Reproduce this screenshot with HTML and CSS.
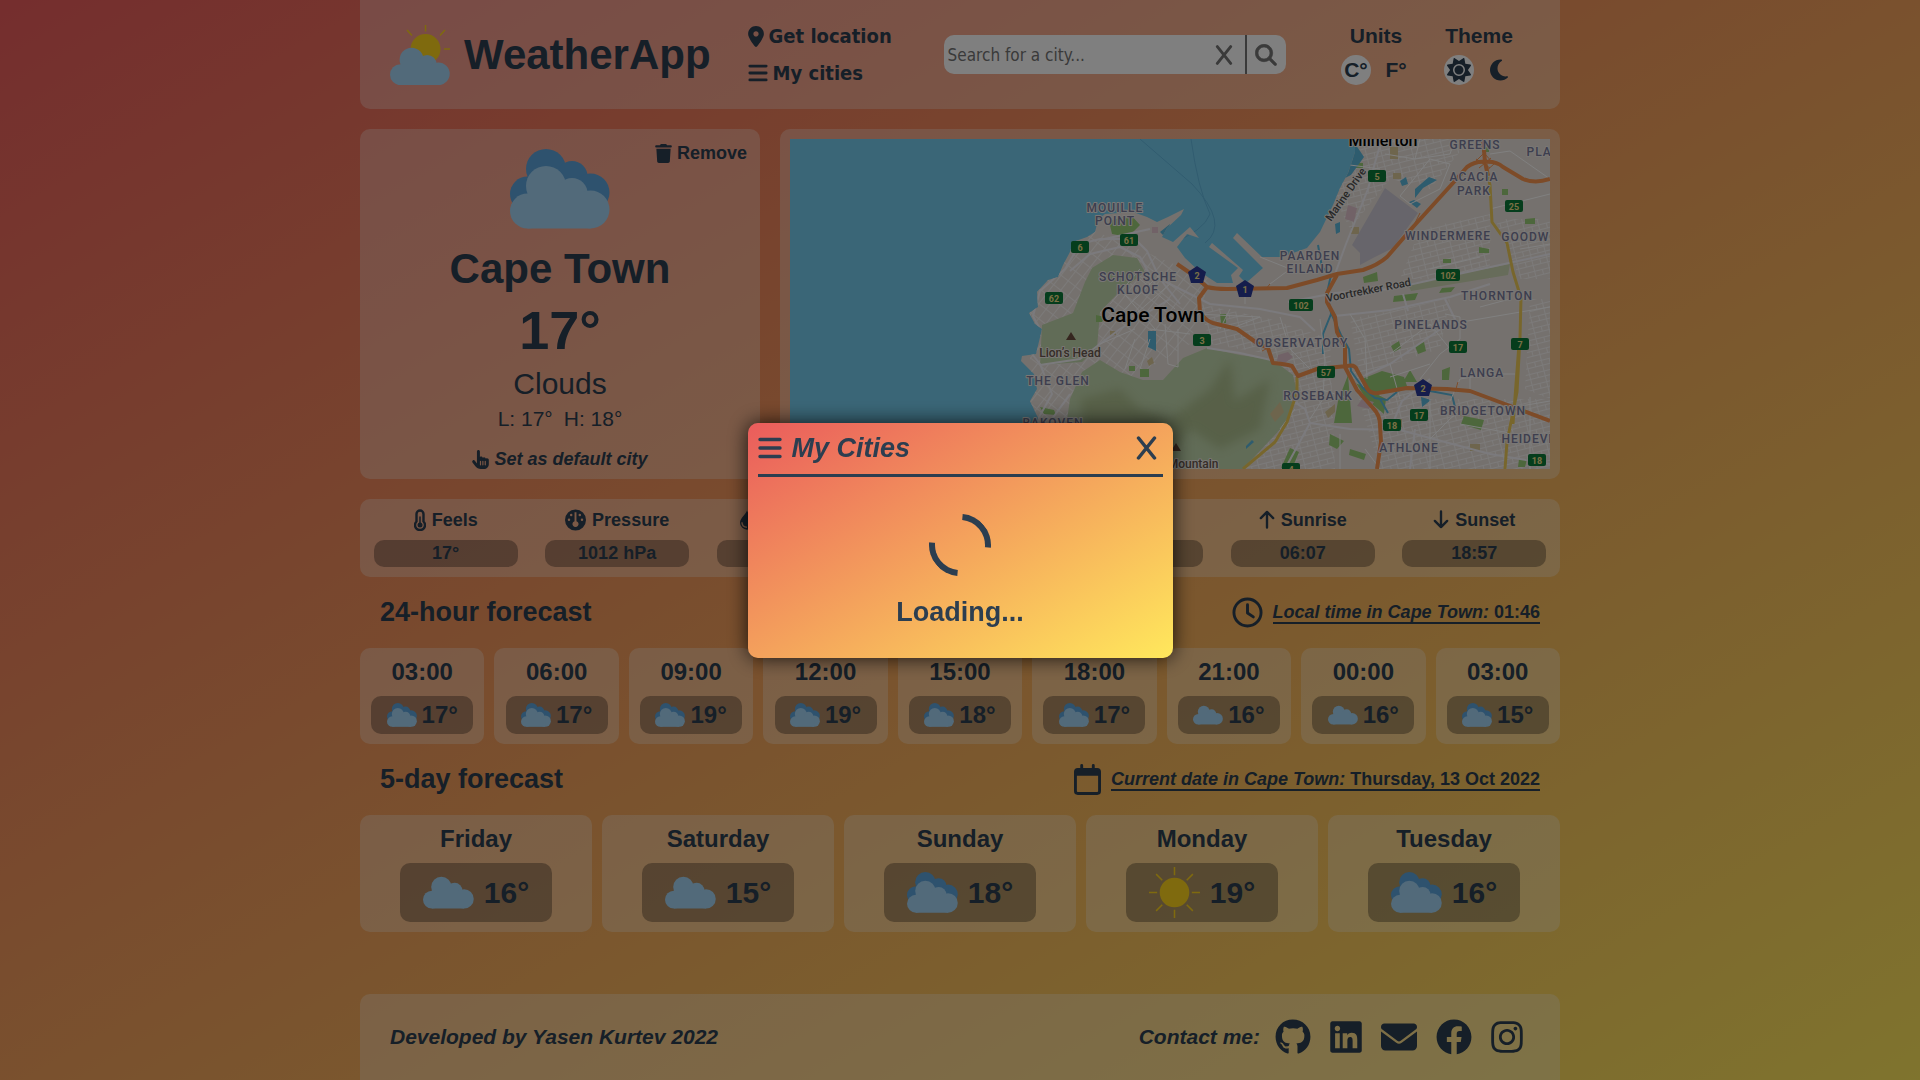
FILE: index.html
```html
<!DOCTYPE html>
<html lang="en">
<head>
<meta charset="utf-8">
<meta name="viewport" content="width=device-width, initial-scale=1">
<title>WeatherApp</title>
<link rel="stylesheet" href="styles.css">
</head>
<body>
<svg class="sprite" aria-hidden="true">
  <defs>
    <g id="cloud-shape"><circle cx="17.500" cy="62" r="17.500"/><circle cx="36" cy="37" r="20"/><circle cx="62" cy="44.500" r="15.500"/><circle cx="80.500" cy="60.500" r="19"/><path d="M17.500 45h63v34.500h-63z"/></g>
    <symbol id="i-clouds" viewBox="0 0 100 100"><use href="#cloud-shape" class="cloud-back" y="-7"/><use href="#cloud-shape" class="cloud-front" y="10"/></symbol>
    <symbol id="i-cloud" viewBox="0 0 100 100"><use href="#cloud-shape" class="cloud-front" y="2"/></symbol>
    <symbol id="i-sunny" viewBox="0 0 50 50"><circle class="sun" cx="25" cy="25" r="14.500"/><path class="rays" d="M25 0v8M25 42v8M0 25h8M42 25h8M7 7l6 6M37 37l6 6M43 7l-6 6M7 43l6-6"/></symbol>
    <symbol id="i-logo" viewBox="0 0 60 60"><circle class="sun" cx="35.500" cy="24" r="15"/><path class="rays" d="M35.500 0v6.500M17 5l5 5.500M55 5l-5 5.500M54 24h6"/><use href="#cloud-shape" class="cloud-front" transform="translate(0 12.500) scale(.6)"/></symbol>
    <symbol id="i-pin" viewBox="0 0 384 512"><path d="M215.700 499.200C267 435 384 279.400 384 192C384 86 298 0 192 0S0 86 0 192c0 87.400 117 243 168.300 307.200c12.300 15.300 35.100 15.300 47.400 0zM192 256c-35.300 0-64-28.700-64-64s28.700-64 64-64s64 28.700 64 64s-28.700 64-64 64z"/></symbol>
    <symbol id="i-bars" viewBox="0 0 24 22"><path class="line" stroke-width="3.400" d="M2 2.500h20M2 11h20M2 19.500h20"/></symbol>
    <symbol id="i-x" viewBox="0 0 20 24"><path class="line" stroke-width="3.500" d="M2 2l16 20M18 2L2 22"/></symbol>
    <symbol id="i-search" viewBox="-8 -8 528 528"><path stroke="currentColor" stroke-width="16" d="M416 208c0 45.900-14.900 88.300-40 122.700L502.600 457.400c12.500 12.500 12.500 32.800 0 45.300s-32.800 12.500-45.300 0L330.700 376c-34.400 25.200-76.800 40-122.700 40C93.100 416 0 322.900 0 208S93.100 0 208 0S416 93.100 416 208zM208 352a144 144 0 1 0 0-288 144 144 0 1 0 0 288z"/></symbol>
    <symbol id="i-sun" viewBox="0 0 512 512"><path d="M361.500 1.200c5 2.100 8.600 6.600 9.600 11.900L391 121l107.900 19.800c5.300 1 9.800 4.600 11.900 9.600s1.500 10.700-1.600 15.200L446.900 256l62.300 90.300c3.100 4.500 3.700 10.200 1.600 15.200s-6.600 8.600-11.900 9.600L391 391 371.100 498.900c-1 5.300-4.600 9.800-9.600 11.900s-10.700 1.500-15.200-1.600L256 446.900l-90.300 62.300c-4.500 3.100-10.200 3.700-15.200 1.600s-8.600-6.600-9.600-11.900L121 391 13.100 371.100c-5.300-1-9.800-4.600-11.900-9.600s-1.500-10.700 1.600-15.200L65.100 256 2.800 165.700c-3.100-4.500-3.700-10.200-1.600-15.200s6.600-8.600 11.900-9.600L121 121 140.900 13.100c1-5.300 4.600-9.800 9.600-11.900s10.700-1.500 15.200 1.600L256 65.100 346.300 2.800c4.500-3.100 10.200-3.700 15.200-1.600zM160 256a96 96 0 1 1 192 0 96 96 0 1 1-192 0zm224 0a128 128 0 1 0-256 0 128 128 0 1 0 256 0z"/></symbol>
    <symbol id="i-moon" viewBox="0 0 384 512"><path d="M223.500 32C100 32 0 132.300 0 256S100 480 223.500 480c60.600 0 115.500-24.200 155.800-63.400c5-4.900 6.300-12.500 3.100-18.700s-10.100-9.700-17-8.500c-9.800 1.700-19.800 2.600-30.100 2.600c-96.900 0-175.500-78.800-175.500-176c0-65.800 36-123.100 89.300-153.300c6.100-3.500 9.200-10.500 7.700-17.300s-7.300-11.900-14.300-12.500c-6.300-.5-12.600-.8-19-.8z"/></symbol>
    <symbol id="i-trash" viewBox="0 0 448 512"><path d="M135.200 17.700L128 32H32C14.300 32 0 46.300 0 64S14.300 96 32 96H416c17.700 0 32-14.300 32-32s-14.300-32-32-32H320l-7.200-14.300C307.400 6.800 296.300 0 284.200 0H163.800c-12.100 0-23.200 6.800-28.600 17.700zM416 128H32L53.200 467c1.600 25.300 22.600 45 47.900 45H346.900c25.300 0 46.300-19.700 47.900-45L416 128z"/></symbol>
    <symbol id="i-hand" viewBox="0 0 448 512"><path d="M128 40c0-22.100 17.900-40 40-40s40 17.900 40 40V188.200c8.500-7.600 19.700-12.200 32-12.200c20.600 0 38.200 13 45 31.200c8.800-9.300 21.200-15.200 35-15.200c25.300 0 46 19.500 47.900 44.300c8.500-7.700 19.800-12.300 32.100-12.300c26.500 0 48 21.500 48 48v112c0 70.700-57.300 128-128 128H234.700c-60 0-118-30-154.700-80L8 336c-13.300-17.700-9.700-42.700 8-56s42.700-9.700 56 8l56 74.700V40zM240 304c0-8.800-7.200-16-16-16s-16 7.200-16 16v96c0 8.800 7.200 16 16 16s16-7.200 16-16V304zm48-16c-8.800 0-16 7.200-16 16v96c0 8.800 7.200 16 16 16s16-7.200 16-16V304c0-8.800-7.200-16-16-16zm80 16c0-8.800-7.200-16-16-16s-16 7.200-16 16v96c0 8.800 7.200 16 16 16s16-7.200 16-16V304z"/></symbol>
    <symbol id="i-thermo" viewBox="0 0 12 22"><path class="line" stroke-width="2.400" d="M2.500 5a3.500 3.500 0 0 1 7 0v7.500a5 5 0 1 1-7 0z"/><path class="line" stroke-width="1.500" d="M6 8v7"/><circle cx="6" cy="16" r="2.500"/></symbol>
    <symbol id="i-gauge" viewBox="0 0 22 22"><path fill-rule="evenodd" d="M11 0a11 11 0 1 0 0 22a11 11 0 0 0 0-22zM10 3h2v9.200a3.200 3.200 0 1 1-2 0zM6.500 4.500a1.300 1.300 0 1 1 0 2.600a1.300 1.300 0 0 1 0-2.600zM15.500 4.500a1.300 1.300 0 1 1 0 2.600a1.300 1.300 0 0 1 0-2.600zM4.200 9.500a1.300 1.300 0 1 1 0 2.600a1.300 1.300 0 0 1 0-2.600zM17.800 9.500a1.300 1.300 0 1 1 0 2.600a1.300 1.300 0 0 1 0-2.600z"/></symbol>
    <symbol id="i-drop" viewBox="0 0 16 22"><path fill-rule="evenodd" d="M8 0C7 4 0 9 0 14a8 8 0 0 0 16 0C16 9 9 4 8 0zM3 13.500c0 3 2 5 5 5v1.500c-4 0-6.500-2.500-6.500-6.500z"/></symbol>
    <symbol id="i-up" viewBox="0 0 16 20"><path class="line" stroke-width="2.500" d="M8 18.500V2M1.500 8.500L8 2l6.500 6.500"/></symbol>
    <symbol id="i-down" viewBox="0 0 16 20"><path class="line" stroke-width="2.500" d="M8 1.500V18M1.500 11.500L8 18l6.500-6.500"/></symbol>
    <symbol id="i-clock" viewBox="0 0 32 32"><circle class="line" stroke-width="3" cx="16" cy="16" r="14"/><path class="line" stroke-width="3" d="M16 8v8.500l6 4"/></symbol>
    <symbol id="i-calendar" viewBox="0 0 28 32"><path fill-rule="evenodd" d="M6.500 1.500a1.500 1.500 0 0 1 3 0V4h9V1.500a1.500 1.500 0 0 1 3 0V4H24a4 4 0 0 1 4 4v20a4 4 0 0 1-4 4H4a4 4 0 0 1-4-4V8a4 4 0 0 1 4-4h2.500zM3 12v16a1 1 0 0 0 1 1h20a1 1 0 0 0 1-1V12z"/></symbol>
    <symbol id="i-github" viewBox="0 0 496 512"><path d="M165.900 397.400c0 2-2.300 3.600-5.200 3.600-3.300.3-5.600-1.300-5.600-3.600 0-2 2.300-3.600 5.200-3.600 3-.3 5.600 1.300 5.600 3.600zm-31.100-4.500c-.7 2 1.300 4.300 4.300 4.900 2.600 1 5.600 0 6.200-2s-1.300-4.300-4.300-5.200c-2.600-.7-5.500.3-6.200 2.300zM244.800 8C106.100 8 0 113.300 0 252c0 110.900 69.800 205.800 169.500 239.200 12.800 2.300 17.300-5.600 17.300-12.100 0-6.200-.3-40.400-.3-61.400 0 0-70 15-84.700-29.800 0 0-11.400-29.100-27.800-36.600 0 0-22.900-15.700 1.600-15.400 0 0 24.900 2 38.600 25.800 21.900 38.600 58.600 27.500 72.900 20.900 2.300-16 8.800-27.100 16-33.700-55.900-6.200-112.300-14.300-112.300-110.500 0-27.500 7.600-41.300 23.600-58.900-2.600-6.500-11.100-33.300 3-67.900 20.900-6.500 69 27 69 27 20-5.600 41.500-8.500 62.800-8.500s42.800 2.900 62.800 8.500c0 0 48.100-33.600 69-27 14.100 34.700 5.600 61.400 3 67.900 16 17.700 25.800 31.500 25.800 58.900 0 96.500-58.900 104.200-114.800 110.500 9.200 7.900 17 22.900 17 46.400 0 33.700-.3 75.400-.3 83.600 0 6.500 4.600 14.400 17.300 12.100C428.200 457.800 496 362.900 496 252 496 113.300 383.500 8 244.800 8z"/></symbol>
    <symbol id="i-linkedin" viewBox="0 0 448 512"><path d="M416 32H31.900C14.300 32 0 46.500 0 64.300v383.400C0 465.500 14.300 480 31.900 480H416c17.600 0 32-14.500 32-32.300V64.300c0-17.800-14.400-32.300-32-32.300zM135.400 416H69V202.200h66.500V416zm-33.200-243c-21.300 0-38.500-17.300-38.500-38.500S80.900 96 102.200 96c21.200 0 38.500 17.300 38.500 38.500 0 21.300-17.200 38.500-38.500 38.500zm282.100 243h-66.400V312c0-24.800-.5-56.700-34.500-56.700-34.600 0-39.900 27-39.900 54.900V416h-66.400V202.200h63.700v29.200h.9c8.900-16.800 30.600-34.500 62.900-34.500 67.200 0 79.700 44.300 79.700 101.900V416z"/></symbol>
    <symbol id="i-mail" viewBox="0 0 512 512"><path d="M48 64C21.500 64 0 85.500 0 112c0 15.100 7.100 29.300 19.200 38.400L236.800 313.600c11.400 8.500 27 8.500 38.400 0L492.800 150.400c12.100-9.100 19.200-23.300 19.200-38.400c0-26.500-21.500-48-48-48H48zM0 176V384c0 35.300 28.700 64 64 64H448c35.300 0 64-28.700 64-64V176L294.400 339.200c-22.800 17.100-54 17.100-76.800 0L0 176z"/></symbol>
    <symbol id="i-facebook" viewBox="0 0 512 512"><path d="M504 256C504 119 393 8 256 8S8 119 8 256c0 123.780 90.690 226.380 209.250 245V327.690h-63V256h63v-54.640c0-62.150 37-96.480 93.670-96.480 27.140 0 55.520 4.840 55.520 4.840v61h-31.280c-30.800 0-40.410 19.120-40.410 38.730V256h68.780l-11 71.690h-57.780V501C413.310 482.380 504 379.780 504 256z"/></symbol>
    <symbol id="i-instagram" viewBox="0 0 448 512"><path d="M224.100 141c-63.600 0-114.900 51.300-114.900 114.900s51.300 114.900 114.900 114.900S339 319.500 339 255.900 287.700 141 224.100 141zm0 189.600c-41.100 0-74.700-33.500-74.700-74.700s33.500-74.700 74.700-74.700 74.700 33.500 74.700 74.700-33.600 74.700-74.700 74.700zm146.400-194.300c0 14.900-12 26.800-26.800 26.800-14.900 0-26.800-12-26.800-26.800s12-26.800 26.800-26.800 26.800 12 26.800 26.800zm76.100 27.200c-1.700-35.900-9.900-67.700-36.200-93.900-26.200-26.200-58-34.400-93.900-36.200-37-2.100-147.900-2.100-184.900 0-35.800 1.700-67.600 9.900-93.900 36.100s-34.400 58-36.200 93.900c-2.100 37-2.100 147.900 0 184.900 1.700 35.900 9.900 67.700 36.200 93.900s58 34.400 93.900 36.200c37 2.100 147.900 2.100 184.900 0 35.900-1.700 67.700-9.900 93.900-36.200 26.200-26.200 34.400-58 36.200-93.900 2.100-37 2.100-147.800 0-184.800zM398.800 388c-7.800 19.600-22.900 34.700-42.600 42.600-29.500 11.700-99.500 9-132.100 9s-102.700 2.600-132.100-9c-19.600-7.800-34.700-22.900-42.600-42.600-11.700-29.500-9-99.500-9-132.100s-2.600-102.700 9-132.100c7.800-19.600 22.900-34.700 42.600-42.600 29.500-11.700 99.500-9 132.100-9s102.700-2.600 132.100 9c19.600 7.800 34.700 22.900 42.600 42.600 11.700 29.500 9 99.500 9 132.100s2.700 102.700-9 132.100z"/></symbol>
  </defs>
</svg>

<div class="app">
  <header class="header card">
    <div class="brand">
      <svg class="brand-logo" aria-hidden="true"><use href="#i-logo"/></svg>
      <h1 class="brand-name">WeatherApp</h1>
    </div>
    <nav class="nav">
      <button class="nav-item" type="button"><svg class="icon-pin" aria-hidden="true"><use href="#i-pin"/></svg>Get location</button>
      <button class="nav-item" type="button"><svg class="icon-bars" aria-hidden="true"><use href="#i-bars"/></svg>My cities</button>
    </nav>
    <form class="search">
      <input class="search-input" type="text" aria-label="Search for a city" placeholder="Search for a city...">
      <button class="search-clear" type="button" aria-label="Clear"><svg class="icon-clear" aria-hidden="true"><use href="#i-x"/></svg></button>
      <button class="search-go" type="button" aria-label="Search"><svg class="icon-search" aria-hidden="true"><use href="#i-search"/></svg></button>
    </form>
    <div class="settings">
      <div class="setting">
        <span>Units</span>
        <div class="options">
          <button class="option active" type="button">C°</button>
          <button class="option" type="button">F°</button>
        </div>
      </div>
      <div class="setting">
        <span>Theme</span>
        <div class="options">
          <button class="option active" type="button" aria-label="Light"><svg class="icon-theme" aria-hidden="true"><use href="#i-sun"/></svg></button>
          <button class="option" type="button" aria-label="Dark"><svg class="icon-theme" aria-hidden="true"><use href="#i-moon"/></svg></button>
        </div>
      </div>
    </div>
  </header>

  <main>
    <div class="overview">
      <section class="city card">
        <button class="remove" type="button"><svg class="icon-small" aria-hidden="true"><use href="#i-trash"/></svg>Remove</button>
        <svg class="city-icon" aria-hidden="true"><use href="#i-clouds"/></svg>
        <h2 class="city-name">Cape Town</h2>
        <div class="city-temp">17°</div>
        <div class="city-state">Clouds</div>
        <div class="city-range"><span>L: 17°</span><span>H: 18°</span></div>
        <button class="default-city" type="button"><svg class="icon-small" aria-hidden="true"><use href="#i-hand"/></svg>Set as default city</button>
      </section>
      <section class="map-card card">
        <svg class="map" viewBox="0 0 760 330" preserveAspectRatio="xMidYMid slice" role="img" aria-label="Map of Cape Town">
          <defs>
            <pattern id="streets" width="15" height="11" patternUnits="userSpaceOnUse" patternTransform="rotate(-14)"><path class="street" d="M0 .500h15M.500 0v11M8.500 0v5.500M0 5.500h15"/></pattern>
            <pattern id="streets-2" width="9" height="12" patternUnits="userSpaceOnUse" patternTransform="rotate(38)"><path class="street" d="M0 .500h9M.500 0v12"/></pattern>
            <filter id="soft"><feGaussianBlur stdDeviation="5"/></filter>
            <clipPath id="land-clip"><path id="land-shape" d="M246 330L248 279L240 262L247 250L244 235L231 222L232 217L246 215L252 190L245 185L239 174L248 168L247 153L258 141L268 138L273 126L280 113L283 103L297 98L305 93L308 81L315 75L343 73L357 78L367 83L378 78L394 70L391 76L377 89L372 98L383 103L400 88L409 99L397 95L387 108L395 119L410 133L427 144L443 144L441 136L448 129L419 108L422 104L437 117L453 131L449 137L456 144L473 129L443 99L447 94L472 118L492 118L517 109L530 93L543 66L550 49L558 34L565 13L565 0H760V330Z"/></clipPath>
            <clipPath id="hill-clip"><path id="hill-shape" d="M292 233L310 221L330 233L353 241L373 241L393 219L417 209L450 216L483 221L503 236L507 253L497 283L453 330H270L280 260Z"/></clipPath>
          </defs>
          <rect class="water" width="760" height="330"/>
          <path class="ferry" d="M350 0L402 45Q440 85 415 104M401 0Q408 50 420 75Q414 92 380 105"/>
          <use href="#land-shape" class="land"/>
          <g clip-path="url(#land-clip)">
            <path fill="url(#streets-2)" d="M240 330V100L300 90L420 140L400 205L340 240L290 230L285 330Z"/>
            <path fill="url(#streets)" d="M410 165L480 180L540 200L545 330H450L505 250L480 215L420 205ZM560 230L640 260H760V330H590ZM565 0H680L640 50L600 40L560 90L545 60ZM630 90L700 75V140L610 140ZM705 80H760V140L730 140ZM740 160H760V260L735 250ZM560 180L660 160L650 210L570 235Z"/>
            <path class="green" d="M252 186L283 174L295 143L302 129L323 116L347 119L355 133L330 152L310 173L307 209L292 223L250 226Z"/>
            <use href="#hill-shape" class="green"/>
            <g clip-path="url(#hill-clip)"><path class="shade" d="M290 260L330 250L350 270L380 280L420 250L440 220L445 262L480 240L470 290L430 310L400 290L370 330H300Z" filter="url(#soft)"/></g>
            <path class="park" d="M319 82l22-6l9 10l-12 12l-16-3zM572 240l20-8l22 6l4 12l-28 3l-14 2zM548 262l10-26l4 48h-18zM566 244l30 16l-2 15l-18-15zM573 138l14-5l1 9l-14 2zM604 157l24-3l-3 7l-22 2zM652 149l13-1l-4 5l-12 1zM674 277l20 4l-3 10l-20-6zM625 207l9-4l2 9l-8 3zM613 243l7-12l7 12zM577 116l4-13l7 3l-4 12zM652 231l8-3l-1 13h-7zM601 207l8-5l2 7l-7 4zM306 176l9 2l-3 5h-6zM350 230h9v8h-9zM339 227h6v5h-6zM430 175h6v9h-5zM500 309l9 4l-5 12l-13 4zM540 295l14 7l-7 8l-8-4zM560 310l16 5l-2 6l-15-5zM735 80l10-1v6h-10zM689 108l10 2v4h-10zM653 120h8v4h-8zM565 24h8v5h-8zM712 50h6v6h-6zM692 8h7v5h-7zM729 320h8l-2 8h-7zM250 268l14 3l2 5l-12-1z"/>
            <path class="light-green" d="M618 145L720 125L718 136L621 152Z"/>
            <path class="sand" d="M600 8h8v12h-8zM647 137h7v4h-7zM600 280h12v8h-12zM535 273l10-8v8l-7 6zM480 275l10-12l4 10l-9 10zM320 192h6v4h-6zM357 222l5-4l2 6l-5 3zM680 305h10v7h-10zM668 270l8 3l-2 5l-8-3zM561 88h8v7h-8zM603 34h8v6h-8z"/>
            <path class="airfield" d="M595 49L628 74L603 109L583 119L570 126V114L562 106Z"/>
            <path class="pink" d="M558 66l9 3l-3 14l-9-3zM488 216l10-3l5 5l-8 6l-8-2zM572 260l12 3l-5 7l-12-3zM362 88h6v6h-6z"/>
            <path class="river" d="M566 6l8 12l-13 18l-6 3l7-24zM610 42l6-4l2 7l-6 2zM625 50l14-12l8 3l-14 8l-8 10zM619 63l5-2l7 4l-4 4zM552 57l5-4l-2 11l-3 2zM545 85l5-2v10l-4 2zM358 192h8v20l-8-4zM370 93l10-8l-4 14zM631 258l10 3l-9 7zM456 307l6-6l2 2l-8 7z"/>
            <path class="stream" d="M528 106l4 22l9 8l-4 18l4 20l10 22l8 14l2 22l12 17l12 10l12 2l15-12M541 175l-8 20v20M590 260l8 14M640 252l22 4l3 12"/>
            <path class="road wide" d="M592 0L586 20L578 50L556 105L545 135M248 280L262 255L250 225L242 215L250 190L243 177L250 152L275 130L290 105L310 100L345 100L357 112L370 140L390 165M280 132L300 115L330 108L350 118L365 145M310 101L360 90M250 226L290 220L330 190L380 160M370 140L420 165L470 170L510 178L525 192M545 177L600 171L660 158L700 145M498 163L545 154L600 150L760 115M417 209L450 214L485 222M500 260L515 270L520 284L560 290L610 291L700 315L760 325M600 291L612 262L640 240M520 284L495 330M620 330L625 290M280 255L262 280M575 236L600 225L665 180L655 160M613 155L618 172"/>
            <path class="road" d="M595 15L625 20L660 15L665 0M560 26L590 30M610 57L640 20L660 25L650 50L620 65ZM625 20L630 0M700 15L720 12L760 40M700 70L760 55M640 130L690 118M730 110L760 105M660 185L760 168M690 168L720 160M600 215L640 185L660 210M560 175L575 200L577 240M470 118L500 130L480 145M405 175L470 178L440 190M440 170L430 190M490 178L500 210L520 230M455 153V165M530 180L535 220L533 260L520 280M505 270L490 290M320 165L350 130M330 175L370 135M340 180L380 145M330 150L365 190M350 140L385 170M360 200L350 230M375 185L378 225L388 228V190M360 190L400 195M345 200L335 230M310 205L345 190M640 260V330M660 262L670 240L700 235L725 235M680 230V252M670 285L725 295M740 258V330M725 268L760 262M550 295V330M575 310L590 330M640 300L660 280L672 270M610 260L600 225M530 250L560 260M655 175L670 178V200L650 215L630 240M600 238L640 225"/>
            <path class="road yellow" d="M698 38L700 46L702 83L717 104L723 133L731 159L730 199L727 253L717 303L715 330M507 238V253L497 283L485 303L453 330M729 205L723 285"/>
            <path class="road motorway" d="M387 125L403 136L417 148Q425 150 437 150L497 149L527 141L547 135L573 131Q588 126 597 118L623 88L663 44L677 28Q686 22 695 23Q706 22 713 28L733 40Q745 45 760 40M417 148L409 159L410 173Q416 182 423 184L447 190L467 204L478 209L483 224Q495 225 502 227L508 237L527 230L557 227Q565 225 567 231L577 249Q580 255 588 254L617 249L657 250L680 252L723 268L760 282M547 136L537 154V163L545 178L547 193L555 208V228L567 251L583 269Q590 276 590 286L591 303L587 330M693 0L695 23L698 37"/>
            <path class="ramp" d="M686 20L700 29M689 29L701 19M685 23L694 14L704 25L695 33M625 84L630 74M475 151L480 145M665 253L668 243M478 209L472 212"/>
          </g>
          <g class="peak"><path d="M276 201l5-8l5 8zM381 312l5-8l5 8z"/></g>
          <g class="map-label">
            <text x="325" y="73">MOUILLE</text><text x="325" y="86">POINT</text>
            <text x="348" y="142">SCHOTSCHE</text><text x="348" y="155">KLOOF</text>
            <text x="268" y="246">THE GLEN</text><text x="263" y="288">BAKOVEN</text>
            <text x="520" y="121">PAARDEN</text><text x="520" y="134">EILAND</text>
            <text x="685" y="10">GREENS</text><text x="761" y="17">PLATTE</text>
            <text x="684" y="42">ACACIA</text><text x="684" y="56">PARK</text>
            <text x="658" y="101">WINDERMERE</text><text x="749" y="102">GOODWOOD</text>
            <text x="707" y="161">THORNTON</text><text x="641" y="190">PINELANDS</text>
            <text x="512" y="208">OBSERVATORY</text><text x="692" y="238">LANGA</text>
            <text x="528" y="261">ROSEBANK</text><text x="693" y="276">BRIDGETOWN</text>
            <text x="619" y="313">ATHLONE</text><text x="747" y="304">HEIDEVELD</text>
          </g>
          <g class="road-label">
            <text transform="translate(541 83) rotate(-55)">Marine Drive</text>
            <text transform="translate(537 163) rotate(-11)">Voortrekker Road</text>
          </g>
          <g class="peak-label"><text x="280" y="218">Lion’s Head</text><text x="387" y="329">Table Mountain</text></g>
          <g class="town"><text x="363" y="183" class="capital">Cape Town</text><text x="593" y="7">Milnerton</text></g>
          <g class="badge">
            <rect x="281" y="102" width="18" height="12" rx="2"/><text x="290" y="112">6</text>
            <rect x="330" y="95" width="18" height="12" rx="2"/><text x="339" y="105">61</text>
            <rect x="255" y="153" width="18" height="12" rx="2"/><text x="264" y="163">62</text>
            <rect x="578" y="31" width="18" height="12" rx="2"/><text x="587" y="41">5</text>
            <rect x="715" y="61" width="18" height="12" rx="2"/><text x="724" y="71">25</text>
            <rect x="646" y="130" width="24" height="12" rx="2"/><text x="658" y="140">102</text>
            <rect x="499" y="160" width="24" height="12" rx="2"/><text x="511" y="170">102</text>
            <rect x="403" y="195" width="18" height="12" rx="2"/><text x="412" y="205">3</text>
            <rect x="659" y="202" width="18" height="12" rx="2"/><text x="668" y="212">17</text>
            <rect x="721" y="199" width="18" height="12" rx="2"/><text x="730" y="209">7</text>
            <rect x="527" y="227" width="18" height="12" rx="2"/><text x="536" y="237">57</text>
            <rect x="620" y="270" width="18" height="12" rx="2"/><text x="629" y="280">17</text>
            <rect x="593" y="280" width="18" height="12" rx="2"/><text x="602" y="290">18</text>
            <rect x="738" y="315" width="18" height="12" rx="2"/><text x="747" y="325">18</text>
            <rect x="492" y="324" width="18" height="12" rx="2"/><text x="501" y="334">4</text>
          </g>
          <g class="badge national">
            <path d="M407 127l9 6l-3 11h-12l-3-11zM455 141l9 6l-3 11h-12l-3-11zM633 240l9 6l-3 11h-12l-3-11z"/>
            <text x="407" y="140">2</text><text x="455" y="154">1</text><text x="633" y="253">2</text>
          </g>
        </svg>
      </section>
    </div>

    <section class="conditions card">
      <div class="condition"><div class="condition-label"><svg class="icon-thermo" aria-hidden="true"><use href="#i-thermo"/></svg>Feels</div><div class="pill">17°</div></div>
      <div class="condition"><div class="condition-label"><svg class="icon-gauge" aria-hidden="true"><use href="#i-gauge"/></svg>Pressure</div><div class="pill">1012 hPa</div></div>
      <div class="condition"><div class="condition-label"><svg class="icon-drop" aria-hidden="true"><use href="#i-drop"/></svg>Humidity</div><div class="pill">80%</div></div>
      <div class="condition"><div class="condition-label">Clouds</div><div class="pill">75%</div></div>
      <div class="condition"><div class="condition-label">Wind</div><div class="pill">3 m/s</div></div>
      <div class="condition"><div class="condition-label"><svg class="icon-arrow" aria-hidden="true"><use href="#i-up"/></svg>Sunrise</div><div class="pill">06:07</div></div>
      <div class="condition"><div class="condition-label"><svg class="icon-arrow" aria-hidden="true"><use href="#i-down"/></svg>Sunset</div><div class="pill">18:57</div></div>
    </section>

    <div class="section-head">
      <h2 class="section-title">24-hour forecast</h2>
      <div class="stamp"><svg class="icon-clock" aria-hidden="true"><use href="#i-clock"/></svg><span class="stamp-text"><em>Local time in Cape Town:</em> 01:46</span></div>
    </div>
    <section class="hours">
      <article class="slot card"><h3 class="slot-title">03:00</h3><div class="slot-body"><svg class="slot-icon" aria-hidden="true"><use href="#i-clouds"/></svg>17°</div></article>
      <article class="slot card"><h3 class="slot-title">06:00</h3><div class="slot-body"><svg class="slot-icon" aria-hidden="true"><use href="#i-clouds"/></svg>17°</div></article>
      <article class="slot card"><h3 class="slot-title">09:00</h3><div class="slot-body"><svg class="slot-icon" aria-hidden="true"><use href="#i-clouds"/></svg>19°</div></article>
      <article class="slot card"><h3 class="slot-title">12:00</h3><div class="slot-body"><svg class="slot-icon" aria-hidden="true"><use href="#i-clouds"/></svg>19°</div></article>
      <article class="slot card"><h3 class="slot-title">15:00</h3><div class="slot-body"><svg class="slot-icon" aria-hidden="true"><use href="#i-clouds"/></svg>18°</div></article>
      <article class="slot card"><h3 class="slot-title">18:00</h3><div class="slot-body"><svg class="slot-icon" aria-hidden="true"><use href="#i-clouds"/></svg>17°</div></article>
      <article class="slot card"><h3 class="slot-title">21:00</h3><div class="slot-body"><svg class="slot-icon" aria-hidden="true"><use href="#i-cloud"/></svg>16°</div></article>
      <article class="slot card"><h3 class="slot-title">00:00</h3><div class="slot-body"><svg class="slot-icon" aria-hidden="true"><use href="#i-cloud"/></svg>16°</div></article>
      <article class="slot card"><h3 class="slot-title">03:00</h3><div class="slot-body"><svg class="slot-icon" aria-hidden="true"><use href="#i-clouds"/></svg>15°</div></article>
    </section>

    <div class="section-head">
      <h2 class="section-title">5-day forecast</h2>
      <div class="stamp"><svg class="icon-calendar" aria-hidden="true"><use href="#i-calendar"/></svg><span class="stamp-text"><em>Current date in Cape Town:</em> Thursday, 13 Oct 2022</span></div>
    </div>
    <section class="days">
      <article class="slot card"><h3 class="slot-title">Friday</h3><div class="slot-body"><svg class="slot-icon" aria-hidden="true"><use href="#i-cloud"/></svg>16°</div></article>
      <article class="slot card"><h3 class="slot-title">Saturday</h3><div class="slot-body"><svg class="slot-icon" aria-hidden="true"><use href="#i-cloud"/></svg>15°</div></article>
      <article class="slot card"><h3 class="slot-title">Sunday</h3><div class="slot-body"><svg class="slot-icon" aria-hidden="true"><use href="#i-clouds"/></svg>18°</div></article>
      <article class="slot card"><h3 class="slot-title">Monday</h3><div class="slot-body"><svg class="slot-icon" aria-hidden="true"><use href="#i-sunny"/></svg>19°</div></article>
      <article class="slot card"><h3 class="slot-title">Tuesday</h3><div class="slot-body"><svg class="slot-icon" aria-hidden="true"><use href="#i-clouds"/></svg>16°</div></article>
    </section>
  </main>

  <footer class="footer card">
    <span>Developed by Yasen Kurtev 2022</span>
    <div class="contact">
      <span>Contact me:</span>
      <div class="contact-links">
        <a class="contact-link" href="#github" aria-label="GitHub"><svg class="icon-github" aria-hidden="true"><use href="#i-github"/></svg></a>
        <a class="contact-link" href="#linkedin" aria-label="LinkedIn"><svg class="icon-square" aria-hidden="true"><use href="#i-linkedin"/></svg></a>
        <a class="contact-link" href="#email" aria-label="Email"><svg class="icon-round" aria-hidden="true"><use href="#i-mail"/></svg></a>
        <a class="contact-link" href="#facebook" aria-label="Facebook"><svg class="icon-round" aria-hidden="true"><use href="#i-facebook"/></svg></a>
        <a class="contact-link" href="#instagram" aria-label="Instagram"><svg class="icon-square" aria-hidden="true"><use href="#i-instagram"/></svg></a>
      </div>
    </div>
  </footer>
</div>

<div class="overlay">
  <section class="modal" role="dialog" aria-modal="true" aria-labelledby="modal-title">
    <header class="modal-head">
      <svg class="icon-modal-bars" aria-hidden="true"><use href="#i-bars"/></svg>
      <h2 class="modal-title" id="modal-title">My Cities</h2>
      <button class="modal-close" type="button" aria-label="Close"><svg class="icon-modal-x" aria-hidden="true"><use href="#i-x"/></svg></button>
    </header>
    <div class="modal-body">
      <div class="spinner"></div>
      <p class="loading">Loading...</p>
    </div>
  </section>
</div>
</body>
</html>
```
FILE: styles.css
```css
:root {
  --ink: #2c3e50;
  --page: linear-gradient(150deg, #ea5c5c, #f4a25c, #ffe85c);
}

* { box-sizing: border-box; margin: 0; padding: 0; }

body {
  min-height: 100vh;
  background: var(--page);
  color: var(--ink);
  font-family: "Liberation Sans", Arial, sans-serif;
  font-weight: bold;
  font-size: 18px;
  line-height: 20px;
}

button { background: none; border: 0; color: inherit; font: inherit; cursor: pointer; }
svg { display: block; flex: none; fill: currentColor; }
.sprite { position: absolute; width: 0; height: 0; }
.line { fill: none; stroke: currentColor; stroke-linecap: round; stroke-linejoin: round; }
.cloud-front { fill: #a4d4f4; }
.cloud-back { fill: #5ca4dc; }
.sun { fill: #ffd41c; }
.rays { fill: none; stroke: #ffd41c; stroke-width: 1.500; }

.app {
  display: flex;
  flex-direction: column;
  width: 100%;
  max-width: 1200px;
  min-height: 100vh;
  margin: 0 auto;
}

.card { background: rgba(255, 255, 255, .3); border-radius: 10px; }

/* Header */
.header {
  display: flex;
  align-items: center;
  padding: 22px 46px 22px 30px;
  border-radius: 0 0 10px 10px;
}
.brand { display: flex; align-items: center; gap: 14px; }
.brand-logo { width: 60px; height: 60px; }
.brand-name { font-size: 42px; line-height: 48px; }
.nav {
  display: flex;
  flex-direction: column;
  gap: 9px;
  width: 151px;
  margin-left: 37px;
  font-family: "DejaVu Sans Condensed", "Noto Sans", sans-serif;
  font-size: 20px;
  line-height: 28px;
}
.nav-item { display: flex; align-items: center; gap: 5px; white-space: nowrap; }
.icon-pin { width: 16px; height: 21px; }
.icon-bars { width: 20px; height: 18px; }
.search {
  display: flex;
  flex: 0 1 342px;
  height: 39px;
  margin-left: 45px;
  background: #fff;
  border-radius: 10px;
  overflow: hidden;
  color: #757575;
}
.search-input {
  flex: 1;
  min-width: 0;
  padding: 0 4px;
  border: 0;
  background: none;
  font-family: "DejaVu Sans Condensed", "Noto Sans", sans-serif;
  font-size: 17px;
}
.search-clear { display: grid; place-items: center; width: 42px; }
.search-go { display: grid; place-items: center; width: 41px; border-left: 2px solid #757575; }
.icon-clear { width: 18px; height: 20px; }
.icon-search { width: 22px; height: 22px; }
.settings { display: flex; gap: 33px; margin-left: auto; font-size: 21px; line-height: 24px; }
.setting { display: flex; flex-direction: column; align-items: center; gap: 7px; }
.options { display: flex; gap: 10px; }
.option { display: grid; place-items: center; width: 30px; height: 30px; border-radius: 50%; }
.option.active { background: #fff; }
.icon-theme { width: 24px; height: 24px; }

/* Current weather and map */
.overview { display: grid; grid-template-columns: 400px minmax(0, 1fr); gap: 20px; margin-top: 20px; }
.city {
  position: relative;
  display: flex;
  flex-direction: column;
  align-items: center;
  gap: 6px;
  padding: 10px;
}
.remove, .default-city { display: flex; align-items: center; gap: 5px; }
.remove { position: absolute; top: 14px; right: 13px; }
.default-city { margin-top: auto; padding-top: 10px; font-style: italic; }
.icon-small { width: 17px; height: 19px; }
.city-icon { width: 100px; height: 100px; }
.city-name { font-size: 42px; line-height: 48px; }
.city-temp { font-size: 54px; line-height: 62px; }
.city-state { font-size: 30px; line-height: 34px; font-weight: normal; }
.city-range { display: flex; gap: 11px; font-size: 21px; line-height: 24px; font-weight: normal; }
.map-card { padding: 10px; }
.map { width: 100%; height: 330px; }

/* Map drawing */
.water { fill: #75cdee; }
.ferry { fill: none; stroke: #62b8e0; stroke-width: 1; }
.land { fill: #ebe3dc; }
.street { fill: none; stroke: #f8f5f4; stroke-width: 1; }
.green { fill: #c3d8ae; }
.shade { fill: #a3b27e; opacity: .6; }
.light-green { fill: #cfd8b4; }
.park { fill: #9bcf78; }
.sand { fill: #dccb9a; }
.pink { fill: #e2c5cf; }
.airfield { fill: #cfcbd6; }
.river { fill: #5cb8dc; }
.stream { fill: none; stroke: #5cb8dc; stroke-width: 2; }
.road { fill: none; stroke: #fff; stroke-width: 1; stroke-linejoin: round; }
.road.wide { stroke: #f7f5fa; stroke-width: 2; }
.road.yellow { stroke: #f0cd58; stroke-width: 3; }
.road.motorway { stroke: #fa9650; stroke-width: 4; }
.ramp { fill: none; stroke: #fa9650; stroke-width: 1; }
.map text { font-family: Roboto, sans-serif; font-weight: 500; text-anchor: middle; paint-order: stroke; stroke: #f3eeea; stroke-width: 2px; stroke-linejoin: round; }
.map-label text { fill: #7a7c9c; font-size: 12px; letter-spacing: 1px; }
.road-label text { fill: #505050; font-size: 11px; text-anchor: start; }
.peak { fill: #6b4c3e; }
.peak-label text { fill: #6b5a50; font-size: 12px; }
.town text { fill: #000; font-size: 16px; }
.town .capital { font-size: 21px; }
.badge rect { fill: #0a7a38; }
.badge text { fill: #f4e08c; stroke: none; font-size: 9px; font-weight: 700; }
.national path { fill: #2a3a98; }

/* Conditions */
.conditions { display: flex; padding: 10px 0; margin-top: 20px; }
.condition { display: flex; flex: 1; flex-direction: column; align-items: center; gap: 10px; }
.condition-label { display: flex; align-items: center; gap: 6px; height: 21px; }
.pill { width: 84%; background: rgba(0, 0, 0, .3); border-radius: 10px; line-height: 27px; text-align: center; }
.icon-thermo { width: 12px; height: 22px; }
.icon-gauge { width: 21px; height: 22px; }
.icon-drop { width: 14px; height: 20px; }
.icon-arrow { width: 16px; height: 19px; }

/* Forecasts */
.section-head { display: flex; align-items: center; justify-content: space-between; padding: 20px; }
.section-title { font-size: 27px; line-height: 31px; }
.stamp { display: flex; align-items: center; gap: 10px; }
.stamp-text { border-bottom: 2px solid; }
.icon-clock { width: 31px; height: 31px; }
.icon-calendar { width: 27px; height: 31px; }
.hours, .days { display: grid; grid-auto-flow: column; grid-auto-columns: minmax(0, 1fr); gap: 10px; }
.slot { display: flex; flex-direction: column; align-items: center; gap: 10px; padding: 10px; }
.slot-title { font-size: 24px; line-height: 28px; }
.slot-body {
  display: flex;
  align-items: center;
  justify-content: center;
  gap: 5px;
  width: 102px;
  height: 38px;
  background: rgba(0, 0, 0, .3);
  border-radius: 10px;
  font-size: 24px;
}
.slot-icon { width: 30px; height: 30px; }
.days .slot-body { gap: 10px; width: 152px; height: 59px; font-size: 30px; }
.days .slot-icon { width: 51px; height: 51px; }

/* Footer */
.footer {
  display: flex;
  align-items: center;
  justify-content: space-between;
  margin-top: auto;
  padding: 25px 37px 25px 30px;
  border-radius: 10px 10px 0 0;
  font-size: 21px;
  line-height: 24px;
  font-style: italic;
}
.contact { display: flex; align-items: center; gap: 15px; }
.contact-links { display: flex; align-items: center; gap: 19px; }
.contact-link { color: inherit; }
.icon-github { width: 36px; height: 36px; }
.icon-square { width: 32px; height: 36px; }
.icon-round { width: 36px; height: 36px; }

/* Dialog */
.overlay {
  position: fixed;
  inset: 0;
  display: flex;
  align-items: center;
  justify-content: center;
  background: rgba(0, 0, 0, .5);
}
.modal {
  width: 425px;
  max-width: 100%;
  padding: 10px;
  background: var(--page);
  border-radius: 10px;
  box-shadow: 0 0 20px rgba(0, 0, 0, .8);
}
.modal-head {
  display: flex;
  align-items: center;
  gap: 10px;
  padding-bottom: 10px;
  border-bottom: 3px solid;
}
.modal-title { font-size: 27px; line-height: 31px; font-style: italic; }
.modal-close { margin-left: auto; padding-right: 6px; }
.icon-modal-bars { width: 24px; height: 22px; }
.icon-modal-x { width: 21px; height: 24px; }
.modal-body { display: flex; flex-direction: column; align-items: center; gap: 21px; padding: 37px 0 20px; }
.spinner {
  width: 62px;
  height: 62px;
  border: 6px solid transparent;
  border-top-color: var(--ink);
  border-bottom-color: var(--ink);
  border-radius: 50%;
  transform: rotate(50deg);
}
.loading { font-size: 27px; line-height: 31px; }
```
